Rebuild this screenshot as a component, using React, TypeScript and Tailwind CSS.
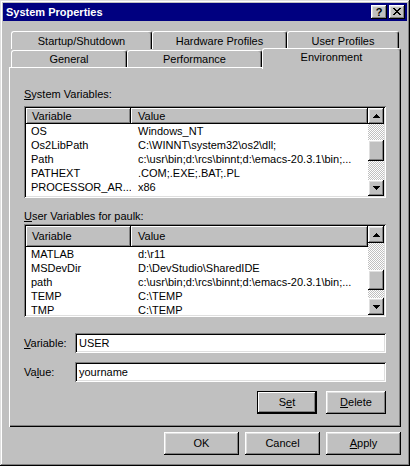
import React from 'react';

const raised =
  'shadow-[inset_-1px_-1px_#000,inset_1px_1px_#fff,inset_-2px_-2px_#808080,inset_2px_2px_#dfdfdf]';
const sunken =
  'shadow-[inset_1px_1px_#808080,inset_-1px_-1px_#fff,inset_2px_2px_#000,inset_-2px_-2px_#dfdfdf]';
const headerCell = 'shadow-[inset_-1px_-1px_#000,inset_1px_1px_#fff,inset_-2px_-2px_#808080]';

type Row = [string, string];

const systemVars: Row[] = [
  ['OS', 'Windows_NT'],
  ['Os2LibPath', 'C:\\WINNT\\system32\\os2\\dll;'],
  ['Path', 'c:\\usr\\bin;d:\\rcs\\binnt;d:\\emacs-20.3.1\\bin;...'],
  ['PATHEXT', '.COM;.EXE;.BAT;.PL'],
  ['PROCESSOR_AR...', 'x86'],
];

const userVars: Row[] = [
  ['MATLAB', 'd:\\r11'],
  ['MSDevDir', 'D:\\DevStudio\\SharedIDE'],
  ['path', 'c:\\usr\\bin;d:\\rcs\\binnt;d:\\emacs-20.3.1\\bin;...'],
  ['TEMP', 'C:\\TEMP'],
  ['TMP', 'C:\\TEMP'],
];

const Arrow = ({ up }: { up?: boolean }) => (
  <svg width="7" height="4" viewBox="0 0 7 4" shapeRendering="crispEdges">
    <path
      d={up ? 'M3 0h1v1h1v1h1v1h1v1H0V3h1V2h1V1h1z' : 'M0 0h7v1H6v1H5v1H4v1H3V3H2V2H1V1H0z'}
      fill="#000"
    />
  </svg>
);

const CloseGlyph = () => {
  const px = [
    [0, 0], [1, 0], [6, 0], [7, 0],
    [1, 1], [2, 1], [5, 1], [6, 1],
    [2, 2], [3, 2], [4, 2], [5, 2],
    [3, 3], [4, 3],
    [2, 4], [3, 4], [4, 4], [5, 4],
    [1, 5], [2, 5], [5, 5], [6, 5],
    [0, 6], [1, 6], [6, 6], [7, 6],
  ];
  return (
    <svg width="8" height="7" viewBox="0 0 8 7" shapeRendering="crispEdges">
      {px.map(([x, y]) => (
        <rect key={`${x}-${y}`} x={x} y={y} width="1" height="1" fill="#000" />
      ))}
    </svg>
  );
};

interface ScrollProps {
  btn: string;
  thumb: string;
}

const ScrollBar = ({ btn, thumb }: ScrollProps) => (
  <div className="flex w-[16px] shrink-0 flex-col">
    <div className={`flex ${btn} items-center justify-center bg-[#c0c0c0] ${raised}`}>
      <Arrow up />
    </div>
    <div className="flex flex-1 flex-col bg-[image:repeating-conic-gradient(#c0c0c0_0%_25%,#ffffff_0%_50%)] bg-[length:2px_2px]">
      <div className={`${thumb} bg-[#c0c0c0] ${raised}`} />
    </div>
    <div className={`flex ${btn} items-center justify-center bg-[#c0c0c0] ${raised}`}>
      <Arrow />
    </div>
  </div>
);

interface ListProps {
  rows: Row[];
  height: string;
  headerH: string;
  btn: string;
  thumb: string;
}

const ListBox = ({ rows, height, headerH, btn, thumb }: ListProps) => (
  <div className={`flex ${height} bg-white p-[2px] ${sunken}`}>
    <div className="flex min-w-0 flex-1 flex-col overflow-hidden">
      <div className={`flex ${headerH} shrink-0 bg-[#c0c0c0]`}>
        <div className={`flex w-[105px] items-center pl-[6px] ${headerCell}`}>Variable</div>
        <div className={`flex flex-1 items-center pl-[7px] ${headerCell}`}>Value</div>
      </div>
      {rows.map(([k, v]) => (
        <div key={k} className="flex h-[14px] shrink-0 items-center leading-[14px]">
          <div className="w-[105px] overflow-hidden whitespace-nowrap pl-[5px]">{k}</div>
          <div className="flex-1 overflow-hidden whitespace-nowrap pl-[7px]">{v}</div>
        </div>
      ))}
    </div>
    <ScrollBar btn={btn} thumb={thumb} />
  </div>
);

const Tab = ({ label, className }: { label: string; className: string }) => (
  <div
    className={`flex justify-center rounded-t-[3px] border-t border-l border-r border-white border-r-black bg-[#c0c0c0] leading-[13px] shadow-[inset_-1px_0_#808080] ${className}`}
  >
    {label}
  </div>
);

const Field = ({ label, value }: { label: React.ReactNode; value: string }) => (
  <div className="flex items-center">
    <div className="w-[51px] shrink-0">{label}</div>
    <div className={`flex h-[20px] flex-1 items-center bg-white pl-[4px] ${sunken}`}>{value}</div>
  </div>
);

const Button = ({ children, className = '' }: { children: React.ReactNode; className?: string }) => (
  <div className={`flex h-[23px] items-center justify-center bg-[#c0c0c0] ${className}`}>{children}</div>
);

export default function App() {
  return (
    <div
      className={`flex h-[466px] w-[410px] flex-col bg-[#c0c0c0] p-[3px] font-['Liberation_Sans',Arial,sans-serif] text-[11px] text-black shadow-[inset_-1px_-1px_#000,inset_1px_1px_#dfdfdf,inset_-2px_-2px_#808080,inset_2px_2px_#fff]`}
    >
      {/* title bar */}
      <div className="flex h-[18px] shrink-0 items-center bg-[#000080] pl-[3px] pr-[2px]">
        <span className="flex-1 text-[11px] font-bold text-white">System Properties</span>
        <div className={`flex h-[14px] w-[16px] items-center justify-center bg-[#c0c0c0] text-[11px] font-bold leading-none ${raised}`}>
          ?
        </div>
        <div className={`ml-[2px] flex h-[14px] w-[16px] items-center justify-center bg-[#c0c0c0] pb-[1px] ${raised}`}>
          <CloseGlyph />
        </div>
      </div>

      {/* tabs */}
      <div className="mt-[10px] ml-[8px] flex h-[18px] shrink-0">
        <Tab label="Startup/Shutdown" className="h-[18px] w-[141px] items-center pt-[1px]" />
        <Tab label="Hardware Profiles" className="h-[18px] w-[135px] items-center pt-[1px]" />
        <Tab label="User Profiles" className="h-[18px] w-[112px] items-center pt-[1px]" />
      </div>
      <div className="-mt-[1px] ml-[8px] flex h-[19px] shrink-0 items-end">
        <Tab label="General" className="h-[17px] w-[116px] items-center" />
        <Tab label="Performance" className="h-[17px] w-[135px] items-center" />
        <Tab
          label="Environment"
          className="relative z-10 -mb-[2px] h-[21px] w-[139px] items-start pt-[2px]"
        />
      </div>

      {/* panel */}
      <div className="ml-[6px] flex h-[360px] w-[392px] shrink-0 flex-col px-[15px] pt-[21px] shadow-[inset_1px_1px_#fff,inset_-1px_-1px_#000,inset_-2px_-2px_#808080]">
        <div className="h-[13px] leading-[13px]">
          <span className="underline">S</span>ystem Variables:
        </div>
        <div className="mt-[5px]">
          <ListBox rows={systemVars} height="h-[92px]" headerH="h-[16px]" btn="h-[16px]" thumb="mt-[16px] h-[21px]" />
        </div>
        <div className="mt-[12px] h-[13px] leading-[13px]">
          <span className="underline">U</span>ser Variables for paulk:
        </div>
        <div className="mt-[1px]">
          <ListBox rows={userVars} height="h-[93px]" headerH="h-[21px]" btn="h-[17px]" thumb="mt-[27px] h-[20px]" />
        </div>
        <div className="mt-[16px]">
          <Field
            label={
              <>
                <span className="underline">V</span>ariable:
              </>
            }
            value="USER"
          />
        </div>
        <div className="mt-[9px]">
          <Field
            label={
              <>
                Va<span className="underline">l</span>ue:
              </>
            }
            value="yourname"
          />
        </div>
        <div className="mt-[9px] flex justify-end gap-[9px]">
          <Button className="w-[60px] border border-black shadow-[inset_-1px_-1px_#000,inset_1px_1px_#fff,inset_-2px_-2px_#808080]">
            S<span className="underline">e</span>t
          </Button>
          <Button className={`w-[60px] ${raised}`}>
            <span className="underline">D</span>elete
          </Button>
        </div>
      </div>

      {/* dialog buttons */}
      <div className="mt-[5px] flex justify-end gap-[6px] pr-[6px]">
        <Button className={`w-[75px] ${raised}`}>OK</Button>
        <Button className={`w-[75px] ${raised}`}>Cancel</Button>
        <Button className={`w-[75px] ${raised}`}>
          <span className="underline">A</span>pply
        </Button>
      </div>
    </div>
  );
}
